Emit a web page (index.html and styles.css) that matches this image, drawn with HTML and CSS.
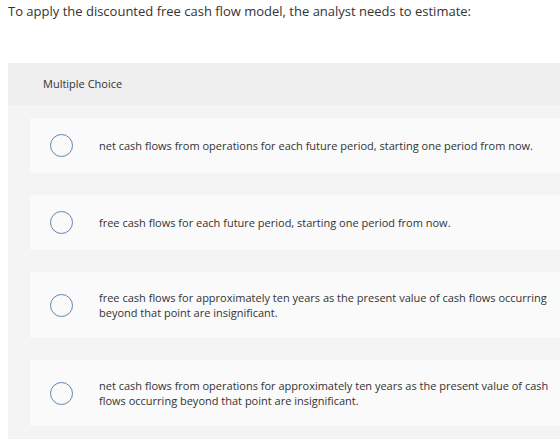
FILE: index.html
```html
<!DOCTYPE html>
<html lang="en">
<head>
  <meta charset="UTF-8">
  <title>Multiple Choice</title>
  <link rel="stylesheet" href="styles.css">
</head>
<body>
  <p class="question">To apply the discounted free cash flow model, the analyst needs to estimate:</p>

  <div class="choices">
    <div class="choices-header">Multiple Choice</div>

    <div class="choice-list">
      <label class="choice">
        <span class="radio"></span>
        <span class="choice-text">net cash flows from operations for each future period, starting one period from now.</span>
      </label>
      <label class="choice">
        <span class="radio"></span>
        <span class="choice-text">free cash flows for each future period, starting one period from now.</span>
      </label>
      <label class="choice">
        <span class="radio"></span>
        <span class="choice-text">free cash flows for approximately ten years as the present value of cash flows occurring beyond that point are insignificant.</span>
      </label>
      <label class="choice">
        <span class="radio"></span>
        <span class="choice-text">net cash flows from operations for approximately ten years as the present value of cash flows occurring beyond that point are insignificant.</span>
      </label>
    </div>
  </div>
</body>
</html>
```

FILE: styles.css
```css
body {
  margin: 0 0 0 8px;
  font-family: 'Open Sans', 'Lato', sans-serif;
  color: #333;
  background: #fff;
  overflow: hidden;
  height: 439px;
}

.question {
  margin: 0;
  padding-top: 2px;
  font-size: 13px;
  line-height: 18px;
}

.choices {
  margin-top: 43px;
  width: 580px;
  background-color: #f4f4f4;
}

.choices-header {
  background-color: #efefef;
  height: 42px;
  line-height: 42px;
  padding-left: 35px;
  font-size: 11px;
}

.choice-list {
  display: flex;
  flex-direction: column;
  gap: 22px;
  padding: 13px 0 20px 22px;
}

.choice {
  display: flex;
  align-items: center;
  gap: 26px;
  padding: 16px 20px;
  background-color: #fafafa;
  font-size: 11px;
  line-height: 15px;
  cursor: pointer;
}

.radio {
  flex: none;
  width: 21px;
  height: 21px;
  border: 1.5px solid #6384ac;
  border-radius: 50%;
}

.choice-text {
  padding: 2px 0;
  max-width: 455px;
}
```
